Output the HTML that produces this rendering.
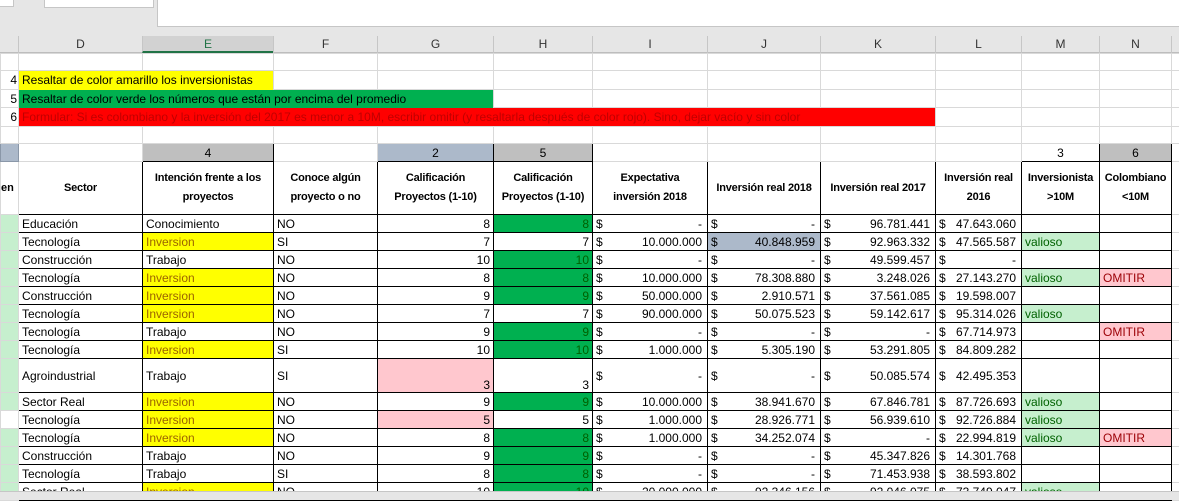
<!DOCTYPE html>
<html><head><meta charset="utf-8"><style>
body{margin:0;width:1179px;height:499px;overflow:hidden;background:#fff;font-family:"Liberation Sans",sans-serif;position:relative}
.top{position:absolute;left:0;top:0;width:1179px;height:53px;background:#e6e6e6;border-bottom:1px solid #bdbdbd;box-sizing:border-box}
.wb{position:absolute;background:#fff;border:1px solid #c6c6c6}
.ch{position:absolute;top:36px;height:17px;font-size:12px;text-align:center;line-height:17px;color:#333;border-left:1px solid #c6c6c6;box-sizing:border-box}
table{position:absolute;left:0;top:53px;border-collapse:collapse;table-layout:fixed;width:1179px}
td{border:1px solid #d9d9d9;padding:0 3px;font-size:12px;white-space:nowrap;overflow:hidden;color:#000;line-height:14px}
tr.d td{height:17px;padding-top:0;padding-bottom:0}
td.b{border:1px solid #000}
td.st{border:1px solid #d9d9d9;background:#c6efce;padding:0}
td.r{text-align:right}
td.c{text-align:right;padding-right:5px}
td.c span{float:left}
.g{background:#00b050;color:#006100}
.y{background:#ffff00;color:#9c6500}
.v{background:#c6efce;color:#006100}
.o{background:#ffc7ce;color:#9c0006}
.p{background:#ffc7ce}
.bg{background:#acb9ca}
.gr{background:#bfbfbf}
.hd td{height:52px;padding:0}
.hd td.b{font-weight:bold;text-align:center;white-space:nowrap;line-height:19px;font-size:11px;letter-spacing:-0.2px}
.bot{position:absolute;left:0;top:491px;width:1179px;height:8px;background:#e6e6e6;border-top:1px solid #c6c6c6}
</style></head><body>
<div class="top">
<div class="wb" style="left:-1px;top:-1px;width:13px;height:6px"></div>
<div class="wb" style="left:44px;top:-1px;width:108px;height:7px"></div>
<div class="wb" style="left:157px;top:-1px;width:1030px;height:26px"></div>
<div class="ch" style="left:18px;width:124px">D</div>
<div class="ch" style="left:142px;width:131px;background:#d2d2d2;border-bottom:2px solid #217346;color:#217346">E</div>
<div class="ch" style="left:273px;width:104px">F</div>
<div class="ch" style="left:377px;width:116px">G</div>
<div class="ch" style="left:493px;width:99px">H</div>
<div class="ch" style="left:592px;width:115px">I</div>
<div class="ch" style="left:707px;width:113px">J</div>
<div class="ch" style="left:820px;width:115px">K</div>
<div class="ch" style="left:935px;width:86px">L</div>
<div class="ch" style="left:1021px;width:78px">M</div>
<div class="ch" style="left:1099px;width:72px">N</div>
<div class="ch" style="left:1171px;width:8px"></div>
</div>
<table>
<colgroup><col style="width:18px"><col style="width:124px"><col style="width:131px"><col style="width:104px"><col style="width:116px"><col style="width:99px"><col style="width:115px"><col style="width:113px"><col style="width:115px"><col style="width:86px"><col style="width:78px"><col style="width:72px"><col style="width:8px"></colgroup>
<tr style="height:17px"><td></td><td></td><td></td><td></td><td></td><td></td><td></td><td></td><td></td><td></td><td></td><td></td><td></td></tr>
<tr style="height:19px"><td class="r" style="padding:0 1px">4</td><td colspan="2" class="y" style="color:#000;border:0">Resaltar de color amarillo los inversionistas</td><td></td><td></td><td></td><td></td><td></td><td></td><td></td><td></td><td></td><td></td></tr>
<tr style="height:18px"><td class="r" style="padding:0 1px">5</td><td colspan="4" style="background:#00b050;border:0">Resaltar de color verde los números que están por encima del promedio</td><td></td><td></td><td></td><td></td><td></td><td></td><td></td><td></td></tr>
<tr style="height:19px"><td class="r" style="padding:0 1px">6</td><td colspan="8" style="background:#ff0000;color:#c00000;border:0">Formular: Si es colombiano y la inversión del 2017 es menor a 10M, escribir omitir (y resaltarla después de color rojo). Sino, dejar vacío y sin color</td><td></td><td></td><td></td><td></td></tr>
<tr style="height:17px"><td></td><td></td><td></td><td></td><td></td><td></td><td></td><td></td><td></td><td></td><td></td><td></td><td></td></tr>
<tr style="height:18px;text-align:center"><td class="bg" style="border-color:#8a97a8"></td><td></td><td class="b gr">4</td><td></td><td class="b bg">2</td><td class="b gr">5</td><td></td><td></td><td></td><td></td><td class="b">3</td><td class="b gr">6</td><td></td></tr>
<tr class="hd"><td style="font-weight:bold;font-size:11px">en</td><td class="b">Sector</td><td class="b">Intención frente a los<br>proyectos</td><td class="b">Conoce algún<br>proyecto o no</td><td class="b">Calificación<br>Proyectos (1-10)</td><td class="b">Calificación<br>Proyectos (1-10)</td><td class="b">Expectativa<br>inversión 2018</td><td class="b">Inversión real 2018</td><td class="b">Inversión real 2017</td><td class="b">Inversión real<br>2016</td><td class="b">Inversionista<br>&gt;10M</td><td class="b">Colombiano<br>&lt;10M</td><td></td></tr>
<tr class="d"><td class="st"></td><td class="b">Educación</td><td class="b">Conocimiento</td><td class="b">NO</td><td class="b r">8</td><td class="b r g">8</td><td class="b c"><span>$</span>-</td><td class="b c"><span>$</span>-</td><td class="b c"><span>$</span>96.781.441</td><td class="b c"><span>$</span>47.643.060</td><td class="b"></td><td class="b"></td><td></td></tr>
<tr class="d"><td class="st"></td><td class="b">Tecnología</td><td class="b y">Inversion</td><td class="b">SI</td><td class="b r">7</td><td class="b r">7</td><td class="b c"><span>$</span>10.000.000</td><td class="b c bg"><span>$</span>40.848.959</td><td class="b c"><span>$</span>92.963.332</td><td class="b c"><span>$</span>47.565.587</td><td class="b v">valioso</td><td class="b"></td><td></td></tr>
<tr class="d"><td class="st"></td><td class="b">Construcción</td><td class="b">Trabajo</td><td class="b">NO</td><td class="b r">10</td><td class="b r g">10</td><td class="b c"><span>$</span>-</td><td class="b c"><span>$</span>-</td><td class="b c"><span>$</span>49.599.457</td><td class="b c"><span>$</span>-</td><td class="b"></td><td class="b"></td><td></td></tr>
<tr class="d"><td class="st"></td><td class="b">Tecnología</td><td class="b y">Inversion</td><td class="b">NO</td><td class="b r">8</td><td class="b r g">8</td><td class="b c"><span>$</span>10.000.000</td><td class="b c"><span>$</span>78.308.880</td><td class="b c"><span>$</span>3.248.026</td><td class="b c"><span>$</span>27.143.270</td><td class="b v">valioso</td><td class="b o">OMITIR</td><td></td></tr>
<tr class="d"><td class="st"></td><td class="b">Construcción</td><td class="b y">Inversion</td><td class="b">NO</td><td class="b r">9</td><td class="b r g">9</td><td class="b c"><span>$</span>50.000.000</td><td class="b c"><span>$</span>2.910.571</td><td class="b c"><span>$</span>37.561.085</td><td class="b c"><span>$</span>19.598.007</td><td class="b"></td><td class="b"></td><td></td></tr>
<tr class="d"><td class="st"></td><td class="b">Tecnología</td><td class="b y">Inversion</td><td class="b">NO</td><td class="b r">7</td><td class="b r">7</td><td class="b c"><span>$</span>90.000.000</td><td class="b c"><span>$</span>50.075.523</td><td class="b c"><span>$</span>59.142.617</td><td class="b c"><span>$</span>95.314.026</td><td class="b v">valioso</td><td class="b"></td><td></td></tr>
<tr class="d"><td class="st"></td><td class="b">Tecnología</td><td class="b">Trabajo</td><td class="b">NO</td><td class="b r">9</td><td class="b r g">9</td><td class="b c"><span>$</span>-</td><td class="b c"><span>$</span>-</td><td class="b c"><span>$</span>-</td><td class="b c"><span>$</span>67.714.973</td><td class="b"></td><td class="b o">OMITIR</td><td></td></tr>
<tr class="d"><td class="st"></td><td class="b">Tecnología</td><td class="b y">Inversion</td><td class="b">SI</td><td class="b r">10</td><td class="b r g">10</td><td class="b c"><span>$</span>1.000.000</td><td class="b c"><span>$</span>5.305.190</td><td class="b c"><span>$</span>53.291.805</td><td class="b c"><span>$</span>84.809.282</td><td class="b"></td><td class="b"></td><td></td></tr>
<tr style="height:34px"><td class="st"></td><td class="b">Agroindustrial</td><td class="b">Trabajo</td><td class="b">SI</td><td class="b r p" style="vertical-align:bottom">3</td><td class="b r" style="vertical-align:bottom">3</td><td class="b c"><span>$</span>-</td><td class="b c"><span>$</span>-</td><td class="b c"><span>$</span>50.085.574</td><td class="b c"><span>$</span>42.495.353</td><td class="b"></td><td class="b"></td><td></td></tr>
<tr class="d"><td class="st"></td><td class="b">Sector Real</td><td class="b y">Inversion</td><td class="b">NO</td><td class="b r">9</td><td class="b r g">9</td><td class="b c"><span>$</span>10.000.000</td><td class="b c"><span>$</span>38.941.670</td><td class="b c"><span>$</span>67.846.781</td><td class="b c"><span>$</span>87.726.693</td><td class="b v">valioso</td><td class="b"></td><td></td></tr>
<tr class="d"><td class="st" style="background:#fff"></td><td class="b">Tecnología</td><td class="b y">Inversion</td><td class="b">NO</td><td class="b r p">5</td><td class="b r">5</td><td class="b c"><span>$</span>1.000.000</td><td class="b c"><span>$</span>28.926.771</td><td class="b c"><span>$</span>56.939.610</td><td class="b c"><span>$</span>92.726.884</td><td class="b v">valioso</td><td class="b"></td><td></td></tr>
<tr class="d"><td class="st"></td><td class="b">Tecnología</td><td class="b y">Inversion</td><td class="b">NO</td><td class="b r">8</td><td class="b r g">8</td><td class="b c"><span>$</span>1.000.000</td><td class="b c"><span>$</span>34.252.074</td><td class="b c"><span>$</span>-</td><td class="b c"><span>$</span>22.994.819</td><td class="b v">valioso</td><td class="b o">OMITIR</td><td></td></tr>
<tr class="d"><td class="st"></td><td class="b">Construcción</td><td class="b">Trabajo</td><td class="b">NO</td><td class="b r">9</td><td class="b r g">9</td><td class="b c"><span>$</span>-</td><td class="b c"><span>$</span>-</td><td class="b c"><span>$</span>45.347.826</td><td class="b c"><span>$</span>14.301.768</td><td class="b"></td><td class="b"></td><td></td></tr>
<tr class="d"><td class="st"></td><td class="b">Tecnología</td><td class="b">Trabajo</td><td class="b">SI</td><td class="b r">8</td><td class="b r g">8</td><td class="b c"><span>$</span>-</td><td class="b c"><span>$</span>-</td><td class="b c"><span>$</span>71.453.938</td><td class="b c"><span>$</span>38.593.802</td><td class="b"></td><td class="b"></td><td></td></tr>
<tr class="d"><td class="st"></td><td class="b">Sector Real</td><td class="b y">Inversion</td><td class="b">NO</td><td class="b r">10</td><td class="b r g">10</td><td class="b c"><span>$</span>20.000.000</td><td class="b c"><span>$</span>92.346.156</td><td class="b c"><span>$</span>92.046.075</td><td class="b c"><span>$</span>73.749.047</td><td class="b v">valioso</td><td class="b"></td><td></td></tr>
</table>
<div class="bot"></div>
</body></html>
